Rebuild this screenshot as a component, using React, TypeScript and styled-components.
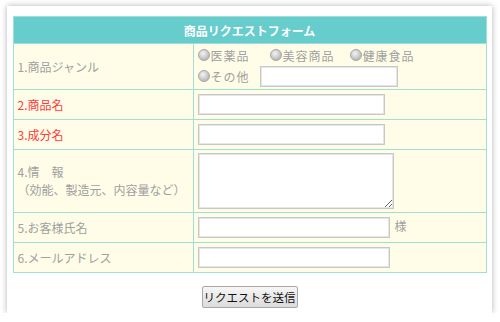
import React from 'react';
import styled, { createGlobalStyle } from 'styled-components';

const GlobalStyle = createGlobalStyle`
  html, body {
    margin: 0;
    padding: 0;
    background: #ffffff;
  }
  body {
    font-family: "Noto Sans CJK JP", "Liberation Sans", sans-serif;
  }
`;

const Card = styled.div`
  width: 473px;
  height: 297px;
  margin: 6px 0 0 7px;
  padding: 10px 6px 0 6px;
  background: #ffffff;
  box-shadow: 0 0 6px rgba(0, 0, 0, 0.3);
  display: flex;
  flex-direction: column;
  align-items: center;
`;

const FormTable = styled.table`
  width: 473px;
  border-collapse: collapse;
  border: 1px solid #9fe0d6;
  table-layout: fixed;
`;

const Column = styled.col<{ $width: number }>`
  width: ${(p) => p.$width}px;
`;

const HeaderCell = styled.th`
  height: 26px;
  padding: 0;
  background: #66cccc;
  color: #ffffff;
  font-size: 12px;
  font-weight: bold;
  text-align: center;
  border: 1px solid #9fe0d6;
`;

const LabelCell = styled.td<{ $required?: boolean }>`
  padding: 0 0 0 4px;
  background: #fffde8;
  border: 1px solid #9fe0d6;
  color: ${(p) => (p.$required ? '#ff3a3a' : '#a0a0a0')};
  font-size: 12px;
  line-height: 18px;
  vertical-align: middle;
`;

const FieldCell = styled.td<{ $height: number }>`
  height: ${(p) => p.$height}px;
  padding: 0 0 0 4px;
  background: #fffde8;
  border: 1px solid #9fe0d6;
  vertical-align: middle;
  font-size: 12px;
  color: #a0a0a0;
`;

const TextInput = styled.input<{ $width: number }>`
  box-sizing: border-box;
  width: ${(p) => p.$width}px;
  height: 21px;
  margin: 0;
  border: 1px solid #c8c8c8;
  box-shadow: inset 0 0 0 1px #e6e6e6;
  background: #ffffff;
  vertical-align: middle;
`;

const TextArea = styled.textarea`
  box-sizing: border-box;
  display: block;
  width: 196px;
  height: 56px;
  margin: 0;
  border: 1px solid #c8c8c8;
  box-shadow: inset 0 0 0 1px #e6e6e6;
  background: #ffffff;
`;

const Suffix = styled.span`
  margin-left: 5px;
  font-size: 12px;
  color: #a0a0a0;
`;

const GenreLine = styled.div`
  display: grid;
  grid-template-columns: 72px 80px auto;
  align-items: center;
  height: 19px;
`;

const OtherLine = styled.div`
  display: grid;
  grid-template-columns: 62px auto;
  align-items: center;
  height: 23px;
`;

const RadioLabel = styled.label`
  display: inline-flex;
  align-items: center;
  font-size: 12px;
  letter-spacing: 1px;
  color: #a0a0a0;
  white-space: nowrap;
`;

const Radio = styled.input.attrs({ type: 'radio' })`
  appearance: none;
  -webkit-appearance: none;
  width: 12px;
  height: 12px;
  margin: 0 1px 0 0;
  border-radius: 50%;
  border: 1px solid #a8a8a8;
  background: radial-gradient(circle at 40% 35%, #f4f4f4 0%, #c4c4c4 60%, #a6a6a6 100%);
`;

const ButtonRow = styled.div`
  display: flex;
  justify-content: center;
  margin-top: 13px;
`;

const SubmitButton = styled.button`
  height: 22px;
  padding: 0 1px;
  font-family: "Noto Sans CJK JP", "Liberation Sans", sans-serif;
  font-size: 11.5px;
  line-height: 18px;
  color: #111111;
  border: 1px solid #a7a7a7;
  border-radius: 2px;
  background: linear-gradient(#f6f6f6, #dcdcdc);
`;

const App = () => {
  return (
    <>
      <GlobalStyle />
      <Card>
        <FormTable>
          <colgroup>
            <Column $width={180} />
            <Column $width={293} />
          </colgroup>
          <thead>
            <tr>
              <HeaderCell colSpan={2}>商品リクエストフォーム</HeaderCell>
            </tr>
          </thead>
          <tbody>
            <tr>
              <LabelCell>1.商品ジャンル</LabelCell>
              <FieldCell $height={45}>
                <GenreLine>
                  <RadioLabel><Radio name="genre" />医薬品</RadioLabel>
                  <RadioLabel><Radio name="genre" />美容商品</RadioLabel>
                  <RadioLabel><Radio name="genre" />健康食品</RadioLabel>
                </GenreLine>
                <OtherLine>
                  <RadioLabel><Radio name="genre" />その他</RadioLabel>
                  <TextInput $width={138} />
                </OtherLine>
              </FieldCell>
            </tr>
            <tr>
              <LabelCell $required>2.商品名</LabelCell>
              <FieldCell $height={29}>
                <TextInput $width={187} />
              </FieldCell>
            </tr>
            <tr>
              <LabelCell $required>3.成分名</LabelCell>
              <FieldCell $height={29}>
                <TextInput $width={187} />
              </FieldCell>
            </tr>
            <tr>
              <LabelCell>
                4.情　報
                <br />
                （効能、製造元、内容量など）
              </LabelCell>
              <FieldCell $height={62}>
                <TextArea />
              </FieldCell>
            </tr>
            <tr>
              <LabelCell>5.お客様氏名</LabelCell>
              <FieldCell $height={29}>
                <TextInput $width={192} />
                <Suffix>様</Suffix>
              </FieldCell>
            </tr>
            <tr>
              <LabelCell>6.メールアドレス</LabelCell>
              <FieldCell $height={29}>
                <TextInput $width={192} />
              </FieldCell>
            </tr>
          </tbody>
        </FormTable>
        <ButtonRow>
          <SubmitButton type="button">リクエストを送信</SubmitButton>
        </ButtonRow>
      </Card>
    </>
  );
};

export default App;
